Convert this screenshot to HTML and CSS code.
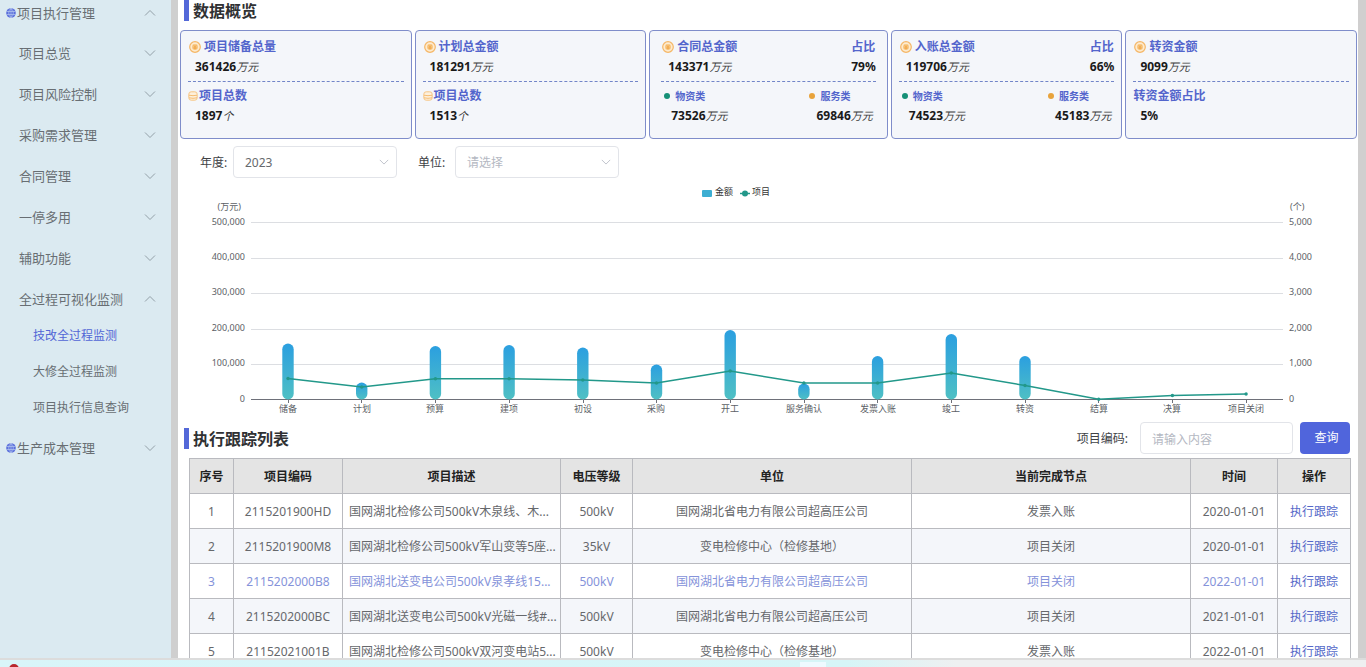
FILE: index.html
```html
<!DOCTYPE html>
<html lang="zh-CN">
<head>
<meta charset="utf-8">
<title>技改全过程监测</title>
<link rel="stylesheet" href="styles.css">
</head>
<body>
<svg class="defs" aria-hidden="true">
  <symbol id="down" viewBox="0 0 12 12"><path d="M1 3.500L6 8.500L11 3.500" fill="none" stroke="currentColor" stroke-width="1"/></symbol>
  <symbol id="up" viewBox="0 0 12 12"><path d="M1 8.500L6 3.500L11 8.500" fill="none" stroke="currentColor" stroke-width="1"/></symbol>
  <symbol id="globe" viewBox="0 0 10 10"><circle cx="5" cy="5" r="4.800" fill="#5a6fdc"/><path d="M0.500 3.500H9.500M0.500 6.500H9.500M5 0V10M5 0.400C2 2.500 2 7.500 5 9.600M5 0.400C8 2.500 8 7.500 5 9.600" fill="none" stroke="#c3d3f2" stroke-width="0.600"/></symbol>
  <symbol id="coin" viewBox="0 0 12 12"><circle cx="6" cy="6" r="5.300" fill="#fdebd0" stroke="#f5b766" stroke-width="1.200"/><circle cx="6" cy="6" r="3" fill="#f8c883"/><path d="M4.500 3.800L6 6L7.500 3.800M6 6V8.500M4.400 6.200H7.600M4.400 7.400H7.600" fill="none" stroke="#f0a545" stroke-width="0.700"/></symbol>
  <symbol id="stack" viewBox="0 0 10 10"><rect x="0.800" y="0.800" width="8.400" height="8.400" rx="2.400" fill="#fdf0dc" stroke="#f6c585" stroke-width="1"/><path d="M1 4.200Q5 5.200 9 4.200M1 6.800Q5 7.800 9 6.800" fill="none" stroke="#f5b766" stroke-width="0.900"/></symbol>
</svg>

<div class="shell">
  <nav class="sidebar">
    <ul class="menu">
      <li><a class="item top first" href="#"><svg class="globe"><use href="#globe"/></svg><span>项目执行管理</span><svg class="arrow"><use href="#up"/></svg></a></li>
      <li><a class="item" href="#"><span>项目总览</span><svg class="arrow"><use href="#down"/></svg></a></li>
      <li><a class="item" href="#"><span>项目风险控制</span><svg class="arrow"><use href="#down"/></svg></a></li>
      <li><a class="item" href="#"><span>采购需求管理</span><svg class="arrow"><use href="#down"/></svg></a></li>
      <li><a class="item" href="#"><span>合同管理</span><svg class="arrow"><use href="#down"/></svg></a></li>
      <li><a class="item" href="#"><span>一停多用</span><svg class="arrow"><use href="#down"/></svg></a></li>
      <li><a class="item" href="#"><span>辅助功能</span><svg class="arrow"><use href="#down"/></svg></a></li>
      <li><a class="item" href="#"><span>全过程可视化监测</span><svg class="arrow"><use href="#up"/></svg></a>
        <ul class="submenu">
          <li><a class="active" href="#">技改全过程监测</a></li>
          <li><a href="#">大修全过程监测</a></li>
          <li><a href="#">项目执行信息查询</a></li>
        </ul>
      </li>
      <li><a class="item top" href="#"><svg class="globe"><use href="#globe"/></svg><span>生产成本管理</span><svg class="arrow"><use href="#down"/></svg></a></li>
    </ul>
  </nav>

  <main class="main">
    <h2 class="heading">数据概览</h2>
    <section class="cards">
      <article class="card">
        <h3><svg class="coin"><use href="#coin"/></svg>项目储备总量</h3>
        <p class="value">361426<i>万元</i></p>
        <hr>
        <h3><svg class="stack"><use href="#stack"/></svg>项目总数</h3>
        <p class="value">1897<i>个</i></p>
      </article>
      <article class="card">
        <h3><svg class="coin"><use href="#coin"/></svg>计划总金额</h3>
        <p class="value">181291<i>万元</i></p>
        <hr>
        <h3><svg class="stack"><use href="#stack"/></svg>项目总数</h3>
        <p class="value">1513<i>个</i></p>
      </article>
      <article class="card wide">
        <div class="pair">
          <div><h3><svg class="coin"><use href="#coin"/></svg>合同总金额</h3><p class="value">143371<i>万元</i></p></div>
          <div class="ratio"><h3>占比</h3><p>79%</p></div>
        </div>
        <hr>
        <div class="pair">
          <div><h4 class="green">物资类</h4><p class="value part">73526<i>万元</i></p></div>
          <div><h4 class="orange">服务类</h4><p class="value part">69846<i>万元</i></p></div>
        </div>
      </article>
      <article class="card">
        <div class="pair">
          <div><h3><svg class="coin"><use href="#coin"/></svg>入账总金额</h3><p class="value">119706<i>万元</i></p></div>
          <div class="ratio"><h3>占比</h3><p>66%</p></div>
        </div>
        <hr>
        <div class="pair">
          <div><h4 class="green">物资类</h4><p class="value part">74523<i>万元</i></p></div>
          <div><h4 class="orange">服务类</h4><p class="value part">45183<i>万元</i></p></div>
        </div>
      </article>
      <article class="card">
        <h3><svg class="coin"><use href="#coin"/></svg>转资金额</h3>
        <p class="value">9099<i>万元</i></p>
        <hr>
        <h3>转资金额占比</h3>
        <p class="value">5%</p>
      </article>
    </section>

    <form class="filters">
      <label for="year">年度:</label>
      <div class="select"><select id="year"><option>2023</option></select><svg class="caret"><use href="#down"/></svg></div>
      <label for="unit">单位:</label>
      <div class="select empty"><select id="unit"><option>请选择</option></select><svg class="caret"><use href="#down"/></svg></div>
    </form>

    <svg class="chart" viewBox="180 180 1177 236" role="img" aria-label="金额与项目">
      <defs>
        <linearGradient id="bar" x1="0" y1="0" x2="0" y2="1"><stop offset="0" stop-color="#2b9fe0"/><stop offset="1" stop-color="#4fc0c4"/></linearGradient>
      </defs>
      <g class="legend">
        <rect x="702" y="190" width="10" height="7" rx="1" fill="#3daed2"/><text x="715" y="195">金额</text>
        <path d="M740 193.500H750" stroke="#22988a" stroke-width="1.500"/><circle cx="745" cy="193.500" r="3" fill="#22988a"/><text x="752" y="195">项目</text>
      </g>
      <path class="grid" d="M251 222.500H1283M251 258.500H1283M251 293.500H1283M251 329.500H1283M251 364.500H1283"/>
      <g class="axis left">
        <text x="241" y="210">(万元)</text>
        <text x="245" y="225">500,000</text><text x="245" y="260">400,000</text><text x="245" y="295">300,000</text><text x="245" y="331">200,000</text><text x="245" y="366">100,000</text><text x="245" y="402">0</text>
      </g>
      <g class="axis">
        <text x="1290" y="210">(个)</text>
        <text x="1289" y="225">5,000</text><text x="1289" y="260">4,000</text><text x="1289" y="295">3,000</text><text x="1289" y="331">2,000</text><text x="1289" y="366">1,000</text><text x="1289" y="402">0</text>
      </g>
      <path class="base" d="M251 399.500H1283M288.500 400V403M361.500 400V403M435.500 400V403M509.500 400V403M583.500 400V403M656.500 400V403M730.500 400V403M804.500 400V403M877.500 400V403M951.500 400V403M1025.500 400V403M1098.500 400V403M1172.500 400V403M1246.500 400V403"/>
      <g fill="url(#bar)">
        <rect x="282.300" y="343.500" width="11.400" height="56" rx="5.700"/>
        <rect x="356" y="382.500" width="11.400" height="17" rx="5.700"/>
        <rect x="429.700" y="346" width="11.400" height="53.500" rx="5.700"/>
        <rect x="503.400" y="345" width="11.400" height="54.500" rx="5.700"/>
        <rect x="577.100" y="347.500" width="11.400" height="52" rx="5.700"/>
        <rect x="650.800" y="364.500" width="11.400" height="35" rx="5.700"/>
        <rect x="724.500" y="330" width="11.400" height="69.500" rx="5.700"/>
        <rect x="798.200" y="383.500" width="11.400" height="16" rx="5.700"/>
        <rect x="871.900" y="356" width="11.400" height="43.500" rx="5.700"/>
        <rect x="945.600" y="334" width="11.400" height="65.500" rx="5.700"/>
        <rect x="1019.300" y="356" width="11.400" height="43.500" rx="5.700"/>
      </g>
      <polyline class="line" points="288,378.500 361.700,387 435.400,378.800 509.100,378.800 582.800,380 656.500,383 730.200,371 803.900,383 877.600,383 951.300,373 1025,385.500 1098.700,399.300 1172.400,395.500 1246.100,394"/>
      <g fill="#22988a">
        <circle cx="288" cy="378.500" r="1.700"/><circle cx="361.700" cy="387" r="1.700"/><circle cx="435.400" cy="378.800" r="1.700"/><circle cx="509.100" cy="378.800" r="1.700"/><circle cx="582.800" cy="380" r="1.700"/><circle cx="656.500" cy="383" r="1.700"/><circle cx="730.200" cy="371" r="1.700"/><circle cx="803.900" cy="383" r="1.700"/><circle cx="877.600" cy="383" r="1.700"/><circle cx="951.300" cy="373" r="1.700"/><circle cx="1025" cy="385.500" r="1.700"/><circle cx="1098.700" cy="399.300" r="1.700"/><circle cx="1172.400" cy="395.500" r="1.700"/><circle cx="1246.100" cy="394" r="1.700"/>
      </g>
      <g class="axis names">
        <text x="288" y="412">储备</text><text x="362" y="412">计划</text><text x="435" y="412">预算</text><text x="509" y="412">建项</text><text x="583" y="412">初设</text><text x="656" y="412">采购</text><text x="730" y="412">开工</text><text x="804" y="412">服务确认</text><text x="878" y="412">发票入账</text><text x="951" y="412">竣工</text><text x="1025" y="412">转资</text><text x="1099" y="412">结算</text><text x="1172" y="412">决算</text><text x="1246" y="412">项目关闭</text>
      </g>
    </svg>

    <div class="toolbar">
      <h2 class="heading">执行跟踪列表</h2>
      <form class="search">
        <label for="code">项目编码:</label>
        <input id="code" type="text" placeholder="请输入内容">
        <button type="button">查询</button>
      </form>
    </div>

    <table class="list">
      <colgroup><col class="c-no"><col class="c-code"><col class="c-desc"><col class="c-volt"><col><col><col class="c-date"><col class="c-act"></colgroup>
      <thead>
        <tr><th>序号</th><th>项目编码</th><th>项目描述</th><th>电压等级</th><th>单位</th><th>当前完成节点</th><th>时间</th><th>操作</th></tr>
      </thead>
      <tbody>
        <tr><td>1</td><td>2115201900HD</td><td class="desc">国网湖北检修公司500kV木泉线、木...</td><td>500kV</td><td>国网湖北省电力有限公司超高压公司</td><td>发票入账</td><td>2020-01-01</td><td><a href="#">执行跟踪</a></td></tr>
        <tr><td>2</td><td>2115201900M8</td><td class="desc">国网湖北检修公司500kV军山变等5座...</td><td>35kV</td><td>变电检修中心（检修基地）</td><td>项目关闭</td><td>2020-01-01</td><td><a href="#">执行跟踪</a></td></tr>
        <tr class="current"><td>3</td><td>2115202000B8</td><td class="desc">国网湖北送变电公司500kV泉孝线15...</td><td>500kV</td><td>国网湖北省电力有限公司超高压公司</td><td>项目关闭</td><td>2022-01-01</td><td><a href="#">执行跟踪</a></td></tr>
        <tr><td>4</td><td>2115202000BC</td><td class="desc">国网湖北送变电公司500kV光磁一线#...</td><td>500kV</td><td>国网湖北省电力有限公司超高压公司</td><td>项目关闭</td><td>2021-01-01</td><td><a href="#">执行跟踪</a></td></tr>
        <tr><td>5</td><td>21152021001B</td><td class="desc">国网湖北检修公司500kV双河变电站5...</td><td>500kV</td><td>变电检修中心（检修基地）</td><td>发票入账</td><td>2022-01-01</td><td><a href="#">执行跟踪</a></td></tr>
      </tbody>
    </table>
  </main>
</div>
<footer class="taskbar"><span class="dot"></span><span class="tab"></span></footer>
</body>
</html>
```
FILE: styles.css
```css
* { box-sizing: border-box; }

body {
  margin: 0;
  height: 100vh;
  display: flex;
  flex-direction: column;
  overflow: hidden;
  background: #fff;
  color: #66686c;
  font: 12px/20px "Noto Sans", "Noto Sans CJK SC", sans-serif;
}

h2, h3, h4, p, ul { margin: 0; padding: 0; }
ul { list-style: none; }
a { color: inherit; text-decoration: none; }
input, select, button { font: inherit; }
.defs { display: none; }

.shell {
  flex: 1;
  min-height: 0;
  display: flex;
  overflow: hidden;
}

/* Sidebar */
.sidebar {
  flex: none;
  width: 178px;
  background: #dbeaf1;
  border-right: 7px solid #cfcfcf;
  color: #686e73;
  font-size: 13px;
}
.item {
  display: flex;
  align-items: center;
  height: 41px;
  padding: 0 15px 2px 19px;
}
.item.top { padding-left: 6px; }
.item.first { height: 33px; padding-bottom: 7px; }
.globe { width: 10px; height: 10px; margin-right: 1px; }
.arrow { width: 12px; height: 12px; margin-left: auto; color: #93a0a8; }
.submenu a {
  display: block;
  height: 36px;
  padding-left: 33px;
  font-size: 12px;
  line-height: 32px;
}
.submenu .active { color: #5266d6; }

/* Main */
.main {
  flex: 1;
  min-width: 0;
  padding: 0 1px 0 2px;
  border-right: 8px solid #d0cfcf;
}
.heading {
  margin-left: 4px;
  padding: 1px 0 0 4px;
  border-left: 5px solid #5468d8;
  color: #303133;
  font-size: 16px;
  line-height: 20px;
}

/* Cards */
.cards {
  display: grid;
  grid-template-columns: 232fr 232fr 239fr 232fr 232fr;
  gap: 3px;
  margin-top: 9px;
}
.card {
  padding: 6px 7px 12px;
  background: #f4f6fa;
  border: 1px solid #7f8dca;
  border-radius: 4px;
}
.card.wide { padding-left: 11px; padding-right: 11px; }
.card h3 {
  display: flex;
  align-items: center;
  color: #5365cc;
  font-size: 12px;
}
.coin { width: 12px; height: 12px; margin: 0 3px 0 1px; }
.stack { width: 10px; height: 10px; margin-right: 1px; }
.value, .ratio p { color: #1a1a1a; font-weight: 700; }
.value { padding-left: 7px; }
.value i { color: #3a3a3a; font-size: 11px; font-weight: 400; }
.card hr {
  margin: 4px 0;
  border: 0;
  border-top: 1px dashed #7285c8;
}
.pair { display: flex; justify-content: space-between; }
.card h4 {
  display: flex;
  align-items: center;
  gap: 5px;
  padding-left: 3px;
  color: #5365cc;
  font-size: 10px;
}
.card h4::before {
  content: "";
  width: 6px;
  height: 6px;
  border-radius: 50%;
  background: currentColor;
}
.card .green::before { background: #159077; }
.card .orange::before { background: #e8a33c; }
.value.part { padding: 0 3px 0 10px; }

/* Filters */
.filters {
  display: flex;
  align-items: center;
  padding-left: 20px;
  margin: 7px 0 2px;
}
.filters label { width: 33px; padding-top: 2px; color: #404246; }
.select {
  display: grid;
  align-items: center;
  width: 164px;
  margin-right: 21px;
}
.filters .select + label { width: 37px; }
.select > * { grid-area: 1 / 1; }
.select select {
  appearance: none;
  width: 100%;
  height: 32px;
  padding: 2px 11px 0;
  border: 1px solid #e2e4e9;
  border-radius: 4px;
  background: #fff;
  color: #66686c;
}
.select.empty select { color: #b4b8c2; }
.caret {
  width: 10px;
  height: 10px;
  margin-right: 8px;
  justify-self: end;
  color: #b4b8c2;
  pointer-events: none;
}

/* Chart */
.chart { display: block; width: 100%; height: auto; }
.chart text { font-size: 9px; }
.legend text { fill: #333; }
.axis text { fill: #5c5f66; }
.left text { text-anchor: end; }
.names text { text-anchor: middle; }
.grid { stroke: #dcdee2; fill: none; }
.base { stroke: #6e7079; fill: none; }
.line { stroke: #22988a; stroke-width: 1.5px; fill: none; }

/* List */
.toolbar {
  display: flex;
  align-items: center;
  justify-content: space-between;
  margin: 6px 7px 4px 0;
}
.search { display: flex; align-items: center; }
.search label { margin-right: 12px; padding-top: 2px; color: #404246; }
.search input {
  width: 153px;
  height: 32px;
  margin-right: 7px;
  padding: 2px 11px 0;
  border: 1px solid #e2e4e9;
  border-radius: 4px;
  color: #606266;
}
.search input::placeholder { color: #b4b8c2; }
.search button {
  width: 50px;
  height: 32px;
  padding: 0 0 0 3px;
  border: 0;
  border-radius: 4px;
  background: #5065dc;
  color: #fff;
}
.list {
  width: calc(100% - 15px);
  margin-left: 9px;
  border-collapse: collapse;
  table-layout: fixed;
}
.c-no { width: 44px; }
.c-code { width: 109px; }
.c-desc { width: 218px; }
.c-volt { width: 72px; }
.c-date { width: 87px; }
.c-act { width: 73px; }
.list th, .list td {
  height: 35px;
  padding: 2px 0 0;
  border: 1px solid #b9babf;
  text-align: center;
  white-space: nowrap;
}
.list th { background: #e4e4e4; color: #222; }
.list .desc { padding-left: 6px; text-align: left; overflow: hidden; }
.list tbody tr:nth-child(even) { background: #f4f6fa; }
.list .current { color: #8593da; }
.list a { color: #5468c8; }

/* Taskbar */
.taskbar {
  flex: none;
  display: flex;
  height: 9px;
  overflow: hidden;
  border-top: 2px solid #dcdcdc;
  background: linear-gradient(90deg, #d9f5f9, #d6f5f7 62%, #eef0f1 70%, #eef0f1);
}
.dot {
  width: 10px;
  height: 10px;
  margin: 4px 0 0 9px;
  border-radius: 50%;
  background: #b8262c;
}
.tab { width: 26px; margin: 2px 0 0 781px; background: #eefaff; }
```
